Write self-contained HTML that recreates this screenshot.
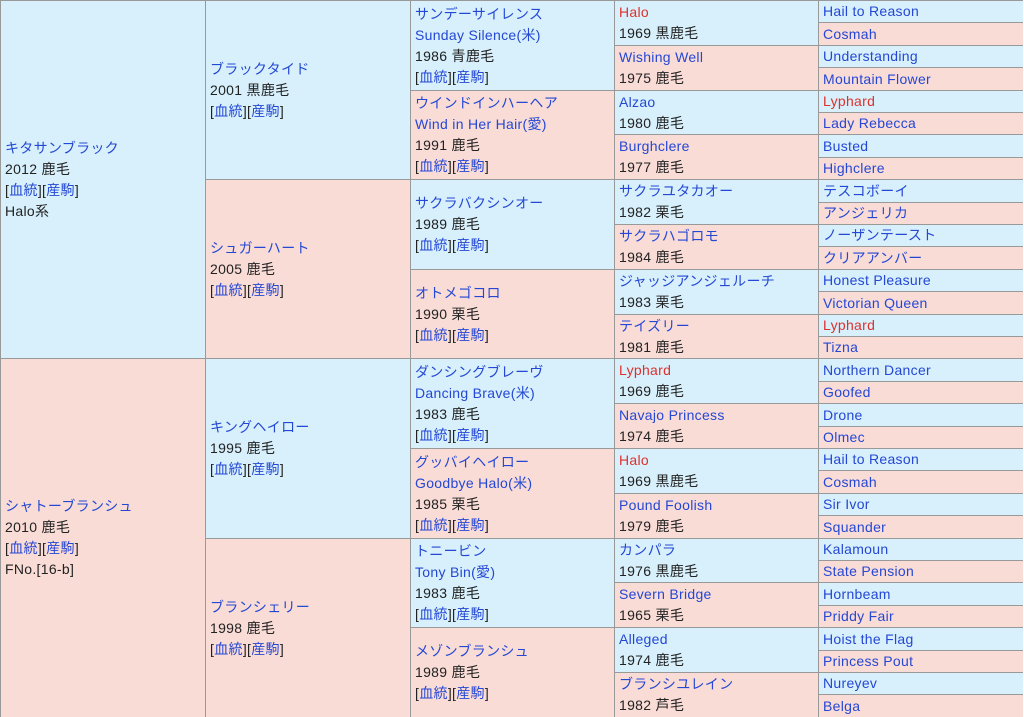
<!DOCTYPE html>
<html><head><meta charset="utf-8"><style>
body{margin:0;background:#fff;width:1024px;height:717px;overflow:hidden}
#t{position:absolute;left:0;top:0;width:1022px;height:716px;border-right:1px solid #999;border-bottom:1px solid #999;}
.c{position:absolute;box-sizing:border-box;border-left:1px solid #999;border-top:1px solid #999;padding-left:4px;display:flex;flex-direction:column;justify-content:center;font-family:"Liberation Sans","Noto Sans CJK JP",sans-serif;font-size:14px;line-height:21px;letter-spacing:0.3px;color:#222;white-space:nowrap;overflow:hidden}
.b{background:#d7f0fc}.p{background:#fadcd7}
a{color:#2447d4;text-decoration:none}.r{color:#e0302a}
.g1{left:0;width:205px}.g2{left:205px;width:205px}.g3{left:410px;width:204px}.g4{left:614px;width:204px}.g5{left:818px;width:205px}
</style></head><body><div id="t">
<div class="c b g1" style="top:0;height:358px"><a>キタサンブラック</a><span>2012 鹿毛</span><span>[<a>血統</a>][<a>産駒</a>]</span><span>Halo系</span></div>
<div class="c p g1" style="top:358px;height:359px"><a>シャトーブランシュ</a><span>2010 鹿毛</span><span>[<a>血統</a>][<a>産駒</a>]</span><span>FNo.[16-b]</span></div>

<div class="c b g2" style="top:0;height:179px"><a>ブラックタイド</a><span>2001 黒鹿毛</span><span>[<a>血統</a>][<a>産駒</a>]</span></div>
<div class="c p g2" style="top:179px;height:179px"><a>シュガーハート</a><span>2005 鹿毛</span><span>[<a>血統</a>][<a>産駒</a>]</span></div>
<div class="c b g2" style="top:358px;height:180px"><a>キングヘイロー</a><span>1995 鹿毛</span><span>[<a>血統</a>][<a>産駒</a>]</span></div>
<div class="c p g2" style="top:538px;height:179px"><a>ブランシェリー</a><span>1998 鹿毛</span><span>[<a>血統</a>][<a>産駒</a>]</span></div>

<div class="c b g3" style="top:0;height:90px"><a>サンデーサイレンス</a><a>Sunday Silence(米)</a><span>1986 青鹿毛</span><span>[<a>血統</a>][<a>産駒</a>]</span></div>
<div class="c p g3" style="top:90px;height:89px"><a>ウインドインハーヘア</a><a>Wind in Her Hair(愛)</a><span>1991 鹿毛</span><span>[<a>血統</a>][<a>産駒</a>]</span></div>
<div class="c b g3" style="top:179px;height:90px"><a>サクラバクシンオー</a><span>1989 鹿毛</span><span>[<a>血統</a>][<a>産駒</a>]</span></div>
<div class="c p g3" style="top:269px;height:89px"><a>オトメゴコロ</a><span>1990 栗毛</span><span>[<a>血統</a>][<a>産駒</a>]</span></div>
<div class="c b g3" style="top:358px;height:90px"><a>ダンシングブレーヴ</a><a>Dancing Brave(米)</a><span>1983 鹿毛</span><span>[<a>血統</a>][<a>産駒</a>]</span></div>
<div class="c p g3" style="top:448px;height:90px"><a>グッバイヘイロー</a><a>Goodbye Halo(米)</a><span>1985 栗毛</span><span>[<a>血統</a>][<a>産駒</a>]</span></div>
<div class="c b g3" style="top:538px;height:89px"><a>トニービン</a><a>Tony Bin(愛)</a><span>1983 鹿毛</span><span>[<a>血統</a>][<a>産駒</a>]</span></div>
<div class="c p g3" style="top:627px;height:90px"><a>メゾンブランシュ</a><span>1989 鹿毛</span><span>[<a>血統</a>][<a>産駒</a>]</span></div>

<div class="c b g4" style="top:0;height:45px"><span class="r">Halo</span><span>1969 黒鹿毛</span></div>
<div class="c p g4" style="top:45px;height:45px"><a>Wishing Well</a><span>1975 鹿毛</span></div>
<div class="c b g4" style="top:90px;height:44px"><a>Alzao</a><span>1980 鹿毛</span></div>
<div class="c p g4" style="top:134px;height:45px"><a>Burghclere</a><span>1977 鹿毛</span></div>
<div class="c b g4" style="top:179px;height:45px"><a>サクラユタカオー</a><span>1982 栗毛</span></div>
<div class="c p g4" style="top:224px;height:45px"><a>サクラハゴロモ</a><span>1984 鹿毛</span></div>
<div class="c b g4" style="top:269px;height:45px"><a>ジャッジアンジェルーチ</a><span>1983 栗毛</span></div>
<div class="c p g4" style="top:314px;height:44px"><a>テイズリー</a><span>1981 鹿毛</span></div>
<div class="c b g4" style="top:358px;height:45px"><span class="r">Lyphard</span><span>1969 鹿毛</span></div>
<div class="c p g4" style="top:403px;height:45px"><a>Navajo Princess</a><span>1974 鹿毛</span></div>
<div class="c b g4" style="top:448px;height:45px"><span class="r">Halo</span><span>1969 黒鹿毛</span></div>
<div class="c p g4" style="top:493px;height:45px"><a>Pound Foolish</a><span>1979 鹿毛</span></div>
<div class="c b g4" style="top:538px;height:44px"><a>カンパラ</a><span>1976 黒鹿毛</span></div>
<div class="c p g4" style="top:582px;height:45px"><a>Severn Bridge</a><span>1965 栗毛</span></div>
<div class="c b g4" style="top:627px;height:45px"><a>Alleged</a><span>1974 鹿毛</span></div>
<div class="c p g4" style="top:672px;height:45px"><a>ブランシユレイン</a><span>1982 芦毛</span></div>

<div class="c b g5" style="top:0;height:22px"><a>Hail to Reason</a></div>
<div class="c p g5" style="top:22px;height:23px"><a>Cosmah</a></div>
<div class="c b g5" style="top:45px;height:22px"><a>Understanding</a></div>
<div class="c p g5" style="top:67px;height:23px"><a>Mountain Flower</a></div>
<div class="c b g5" style="top:90px;height:22px"><span class="r">Lyphard</span></div>
<div class="c p g5" style="top:112px;height:22px"><a>Lady Rebecca</a></div>
<div class="c b g5" style="top:134px;height:23px"><a>Busted</a></div>
<div class="c p g5" style="top:157px;height:22px"><a>Highclere</a></div>
<div class="c b g5" style="top:179px;height:23px"><a>テスコボーイ</a></div>
<div class="c p g5" style="top:202px;height:22px"><a>アンジェリカ</a></div>
<div class="c b g5" style="top:224px;height:22px"><a>ノーザンテースト</a></div>
<div class="c p g5" style="top:246px;height:23px"><a>クリアアンバー</a></div>
<div class="c b g5" style="top:269px;height:22px"><a>Honest Pleasure</a></div>
<div class="c p g5" style="top:291px;height:23px"><a>Victorian Queen</a></div>
<div class="c b g5" style="top:314px;height:22px"><span class="r">Lyphard</span></div>
<div class="c p g5" style="top:336px;height:22px"><a>Tizna</a></div>
<div class="c b g5" style="top:358px;height:23px"><a>Northern Dancer</a></div>
<div class="c p g5" style="top:381px;height:22px"><a>Goofed</a></div>
<div class="c b g5" style="top:403px;height:23px"><a>Drone</a></div>
<div class="c p g5" style="top:426px;height:22px"><a>Olmec</a></div>
<div class="c b g5" style="top:448px;height:22px"><a>Hail to Reason</a></div>
<div class="c p g5" style="top:470px;height:23px"><a>Cosmah</a></div>
<div class="c b g5" style="top:493px;height:22px"><a>Sir Ivor</a></div>
<div class="c p g5" style="top:515px;height:23px"><a>Squander</a></div>
<div class="c b g5" style="top:538px;height:22px"><a>Kalamoun</a></div>
<div class="c p g5" style="top:560px;height:22px"><a>State Pension</a></div>
<div class="c b g5" style="top:582px;height:23px"><a>Hornbeam</a></div>
<div class="c p g5" style="top:605px;height:22px"><a>Priddy Fair</a></div>
<div class="c b g5" style="top:627px;height:23px"><a>Hoist the Flag</a></div>
<div class="c p g5" style="top:650px;height:22px"><a>Princess Pout</a></div>
<div class="c b g5" style="top:672px;height:22px"><a>Nureyev</a></div>
<div class="c p g5" style="top:694px;height:23px"><a>Belga</a></div>
</div></body></html>
